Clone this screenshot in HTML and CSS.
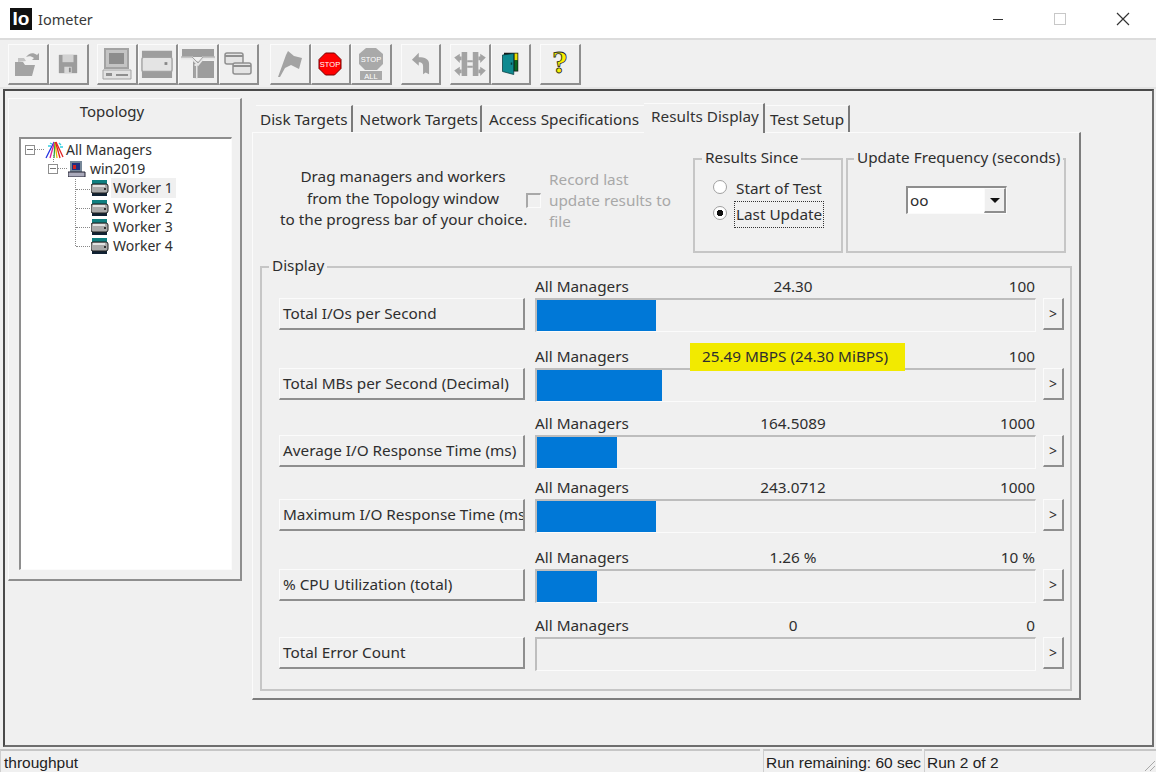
FILE: index.html
```html
<!DOCTYPE html>
<html lang="en">
<head>
    <meta charset="UTF-8">
    <meta name="viewport" content="width=device-width, initial-scale=1.0">
    <title>Iometer</title>
    <link rel="stylesheet" href="styles.css">
</head>
<body>
    <svg class="defs" width="0" height="0">
        <symbol id="worker" viewBox="0 0 18 16">
            <rect x="1" y="0" width="15" height="16" fill="#0f7f80"/>
            <rect x="1" y="13" width="15" height="3" fill="#123"/>
            <rect x="0" y="4" width="17" height="9" rx="2" fill="#a9a9a9" stroke="#222"/>
            <rect x="2" y="5" width="12" height="2" fill="#e2e2e2"/>
            <rect x="13" y="8" width="2" height="2" fill="#333"/>
        </symbol>
    </svg>

    <header class="titlebar">
        <div class="app-logo">Io</div>
        <div class="app-name">Iometer</div>
        <div class="caption-btns">
            <svg width="12" height="12" viewBox="0 0 12 12"><path d="M1 6.5h10" stroke="#333" fill="none"/></svg>
            <svg width="12" height="12" viewBox="0 0 12 12"><rect x="0.5" y="0.5" width="11" height="11" stroke="#c8c8c8" fill="none"/></svg>
            <svg width="14" height="14" viewBox="0 0 14 14"><path d="M1 1l12 12M13 1L1 13" stroke="#333" stroke-width="1.2" fill="none"/></svg>
        </div>
    </header>

    <!-- toolbar, groups are separated by a small gap -->
    <nav class="toolbar">
        <div class="tool-group">
            <button class="tool"><svg width="30" height="28" viewBox="0 0 30 28"><path d="M2 12h8l2 3h10l-3 11H2z" fill="#a3a3a3"/><path d="M5 12V8h6l2 3" fill="#c2c2c2"/><path d="M13 7c3-4 7-5 11-2l2-2v7h-7l2-2c-3-2-5-2-8-1z" fill="#a3a3a3"/></svg></button>
            <button class="tool"><svg width="22" height="22" viewBox="0 0 24 24"><path d="M2 2h20v20H2z" fill="#9c9c9c"/><path d="M6 2h12v8H6z" fill="#d2d2d2"/><path d="M8 15h8v7H8z" fill="#d8d8d8"/><path d="M13 16h2v5h-2z" fill="#888"/></svg></button>
        </div>
        <div class="tool-group second">
            <button class="tool"><svg width="30" height="32" viewBox="0 0 30 32"><path d="M3 1h23v19H3z" fill="#c4c4c4" stroke="#a3a3a3" stroke-width="2"/><path d="M7 5h15v11H7z" fill="#8d8d8d"/><path d="M1 22h28v9H1z" fill="#e2e2e2" stroke="#a3a3a3"/><path d="M4 25h6v3H4zM14 26h12v2H14z" fill="#8f8f8f"/></svg></button>
            <button class="tool"><svg width="32" height="30" viewBox="0 0 34 30"><path d="M1 1h32v8H1zM1 22h32v8H1z" fill="#9d9d9d"/><rect x="1" y="8" width="32" height="15" rx="2" fill="#e4e4e4" stroke="#a3a3a3" stroke-width="1.5"/><path d="M25 13h3v3h-3z" fill="#888"/></svg></button>
            <button class="tool"><svg width="34" height="32" viewBox="0 0 34 32"><path d="M1 1h32v8H1zM12 13h21v17H12z" fill="#9d9d9d"/><path d="M0 10h11l6 6 5-6h12" fill="none" stroke="#e6e6e6" stroke-width="3"/><path d="M0 9h11l6 6 5-6h12" fill="none" stroke="#a3a3a3"/><path d="M15 16v15" stroke="#e6e6e6" stroke-width="3"/><path d="M13 18h2v12h-2z" fill="#a3a3a3"/></svg></button>
            <button class="tool"><svg width="28" height="26" viewBox="0 0 28 26"><rect x="1" y="2" width="18" height="11" rx="2" fill="#e4e4e4" stroke="#8f8f8f" stroke-width="1.5"/><rect x="9" y="12" width="18" height="11" rx="2" fill="#e4e4e4" stroke="#8f8f8f" stroke-width="1.5"/><path d="M1 5h18M9 15h18" stroke="#8f8f8f" stroke-width="2"/></svg></button>
        </div>
        <div class="tool-group third">
            <button class="tool"><svg width="26" height="30" viewBox="0 0 26 30"><path d="M1 28L9 6l2-4 6 5 8 2-3 11-8-4-6 3-5 9z" fill="#a3a3a3"/></svg></button>
            <button class="tool"><svg width="24" height="24" viewBox="0 0 24 24"><path d="M7.5 1h9L23 7.500v9L16.500 23h-9L1 16.500v-9z" fill="#f00" stroke="#700"/><text x="12" y="15" class="stop-text">STOP</text></svg></button>
            <button class="tool"><svg width="24" height="32" viewBox="0 0 24 32"><path d="M7 0h10l7 6v10l-6 6H6l-6-6V6z" fill="#a9a9a9"/><text x="12" y="14" class="stop-text">STOP</text><rect x="1" y="23" width="22" height="9" fill="#a9a9a9"/><text x="12" y="30.500" class="stop-text">ALL</text></svg></button>
        </div>
        <div class="tool-group">
            <button class="tool"><svg width="19" height="24" viewBox="0 0 22 28"><path d="M9 1L1 9l8 7v-4c4 0 5 2 5 5v9l3-2 4 2V14C21 8 16 6 9 6z" fill="#a3a3a3"/></svg></button>
        </div>
        <div class="tool-group">
            <button class="tool"><svg width="34" height="26" viewBox="0 0 36 28"><path d="M9 1h6v26H9zM21 1h6v26h-6z" fill="#a3a3a3"/><path d="M1 7l6-4v3h2v4H7v3zM1 21l6-4v3h2v4H7v3zM35 7l-6-4v3h-2v4h2v3zM35 21l-6-4v3h-2v4h2v3z" fill="#a3a3a3"/><path d="M15 10h6v2h-6zM15 16h6v2h-6z" fill="#a3a3a3"/></svg></button>
            <button class="tool"><svg width="18" height="26" viewBox="0 0 24 32"><path d="M4 1h19v25H4z" fill="#1a1a1a"/><path d="M18 2h4v9h-4z" fill="#e8e000"/><path d="M18 11h4v14h-4z" fill="#0a6a20"/><path d="M2 4l15-2v28L2 26z" fill="#0e8a90" stroke="#063a3c"/><path d="M13 14h2v3h-2z" fill="#063a3c"/></svg></button>
        </div>
        <div class="tool-group">
            <button class="tool"><svg width="30" height="38" viewBox="0 0 30 38"><text x="15" y="28" class="help-text">?</text></svg></button>
        </div>
    </nav>

    <main class="frame">
        <section class="topology">
            <div class="topology-title">Topology</div>
            <div class="tree">
                <div class="tree-row root">
                    <span class="expander"></span>
                    <svg width="22" height="20" viewBox="0 0 22 20" fill="none" stroke-width="1.300"><path d="M10 2L2 18" stroke="#2030e0"/><path d="M10.500 2L6 18" stroke="#e0209a"/><path d="M11 2l-1 16" stroke="#30a040"/><path d="M11 2l2 16" stroke="#e0c000"/><path d="M11.500 2L16 18" stroke="#e02020"/><path d="M12 2l7 15" stroke="#e02020"/><path d="M6 3l2 1M15 3l2 2M4 6h3M16 7h3" stroke="#30d0e0"/></svg>
                    <span>All Managers</span>
                </div>
                <div class="tree-row host">
                    <span class="expander"></span>
                    <svg width="18" height="16" viewBox="0 0 18 16"><path d="M2 0h12v11H2z" fill="#789"/><path d="M4 2h8v7H4z" fill="#203080"/><path d="M5 4h3v4H5z" fill="#d02020"/><path d="M0 11h17v5H0z" fill="#aab" stroke="#223"/></svg>
                    <span>win2019</span>
                </div>
                <div class="workers">
                    <div class="tree-row worker"><svg width="18" height="16"><use href="#worker"/></svg><span class="selected">Worker 1</span></div>
                    <div class="tree-row worker"><svg width="18" height="16"><use href="#worker"/></svg><span>Worker 2</span></div>
                    <div class="tree-row worker"><svg width="18" height="16"><use href="#worker"/></svg><span>Worker 3</span></div>
                    <div class="tree-row worker"><svg width="18" height="16"><use href="#worker"/></svg><span>Worker 4</span></div>
                </div>
            </div>
        </section>

        <section class="tabs-area">
            <div class="tabs">
                <div class="tab first">Disk Targets</div>
                <div class="tab network">Network Targets</div>
                <div class="tab access">Access Specifications</div>
                <div class="tab active">Results Display</div>
                <div class="tab last">Test Setup</div>
            </div>
            <div class="pane">
                <div class="pane-top">
                    <div class="drag-hint">Drag managers and workers<br>from the Topology window<br>to the progress bar of your choice.</div>
                    <div class="record">
                        <span class="checkbox"></span>
                        <span class="record-label">Record last update results to file</span>
                    </div>
                    <fieldset class="group since">
                        <legend>Results Since</legend>
                        <div class="radio-row"><span class="radio"></span><span>Start of Test</span></div>
                        <div class="radio-row"><span class="radio checked"></span><span class="focused">Last Update</span></div>
                    </fieldset>
                    <fieldset class="group frequency">
                        <legend>Update Frequency (seconds)</legend>
                        <div class="combo">
                            <span class="combo-value">oo</span>
                            <span class="combo-btn"></span>
                        </div>
                    </fieldset>
                </div>

                <fieldset class="group display">
                    <legend>Display</legend>

                    <div class="meter">
                        <div class="meter-label"><span>All Managers</span><span class="meter-value">24.30</span><span class="meter-max">100</span></div>
                        <button class="meter-btn">Total I/Os per Second</button>
                        <div class="bar"><div class="bar-fill" style="width: 119px"></div></div>
                        <button class="more-btn">&gt;</button>
                    </div>

                    <div class="meter">
                        <div class="meter-label"><span>All Managers</span><span class="meter-value"><span class="highlight">25.49 MBPS (24.30 MiBPS)</span></span><span class="meter-max">100</span></div>
                        <button class="meter-btn">Total MBs per Second (Decimal)</button>
                        <div class="bar"><div class="bar-fill" style="width: 125px"></div></div>
                        <button class="more-btn">&gt;</button>
                    </div>

                    <div class="meter">
                        <div class="meter-label"><span>All Managers</span><span class="meter-value">164.5089</span><span class="meter-max">1000</span></div>
                        <button class="meter-btn">Average I/O Response Time (ms)</button>
                        <div class="bar"><div class="bar-fill" style="width: 80px"></div></div>
                        <button class="more-btn">&gt;</button>
                    </div>

                    <div class="meter">
                        <div class="meter-label"><span>All Managers</span><span class="meter-value">243.0712</span><span class="meter-max">1000</span></div>
                        <button class="meter-btn">Maximum I/O Response Time (ms)</button>
                        <div class="bar"><div class="bar-fill" style="width: 119px"></div></div>
                        <button class="more-btn">&gt;</button>
                    </div>

                    <div class="meter">
                        <div class="meter-label"><span>All Managers</span><span class="meter-value">1.26 %</span><span class="meter-max">10 %</span></div>
                        <button class="meter-btn">% CPU Utilization (total)</button>
                        <div class="bar"><div class="bar-fill" style="width: 60px"></div></div>
                        <button class="more-btn">&gt;</button>
                    </div>

                    <div class="meter">
                        <div class="meter-label"><span>All Managers</span><span class="meter-value">0</span><span class="meter-max">0</span></div>
                        <button class="meter-btn">Total Error Count</button>
                        <div class="bar"></div>
                        <button class="more-btn">&gt;</button>
                    </div>
                </fieldset>
            </div>
        </section>
    </main>

    <footer class="statusbar">
        <div class="status-cell status-main">throughput</div>
        <div class="status-cell status-remaining">Run remaining: 60 sec</div>
        <div class="status-cell status-run">Run 2 of 2</div>
        <svg class="grip" width="14" height="14" viewBox="0 0 14 14"><path d="M13 3L3 13M13 8l-5 5" stroke="#a8a8a8" fill="none"/></svg>
    </footer>
</body>
</html>
```

FILE: styles.css
```css
* {
    box-sizing: border-box;
}
html, body {
    margin: 0;
    height: 100%;
}
body {
    width: 1156px;
    height: 772px;
    overflow: hidden;
    display: flex;
    flex-direction: column;
    background-color: #f0f0f0;
    color: #2e2e2e;
    font-family: "Noto Sans", Arial, sans-serif;
    font-size: 15.3px;
    line-height: 20px;
}
button {
    font: inherit;
    color: inherit;
    background-color: #f0f0f0;
    padding: 0;
    border-style: solid;
    border-width: 1px 2px 2px 1px;
    border-color: #fbfbfb #8e8e8e #8e8e8e #fbfbfb;
}
.defs {
    display: block;
    height: 0;
}

/* title bar */
.titlebar {
    height: 40px;
    flex: none;
    display: flex;
    align-items: center;
    background-color: #fff;
    border-bottom: 2px solid #dcdcdc;
    padding: 0 26px 1px 10px;
}
.app-logo {
    width: 22px;
    height: 22px;
    background-color: #111;
    color: #fff;
    font-family: "Liberation Sans", Arial, sans-serif;
    font-weight: bold;
    font-size: 19px;
    line-height: 22px;
    text-align: center;
}
.app-name {
    margin-left: 6px;
    font-size: 14.500px;
    color: #3a3a3a;
}
.caption-btns {
    margin-left: auto;
    display: flex;
    align-items: center;
    gap: 50px;
}

/* toolbar */
.toolbar {
    height: 49px;
    flex: none;
    display: flex;
    gap: 9px;
    padding: 4px 0 0 8px;
    border-bottom: 2px solid #e4e4e4;
}
.tool-group {
    display: flex;
}
.tool-group.second {
    margin-left: -1px;
}
.tool-group.third {
    margin-left: 2px;
}
.tool {
    width: 40.500px;
    height: 41px;
    display: flex;
    align-items: center;
    justify-content: center;
}
.stop-text {
    font-family: "Liberation Sans", Arial, sans-serif;
    font-size: 7.500px;
    text-anchor: middle;
    fill: #fff;
}
.help-text {
    font-family: "Liberation Serif", serif;
    font-weight: bold;
    font-size: 32px;
    text-anchor: middle;
    fill: #f8f000;
    stroke: #222;
    stroke-width: 0.8px;
}

/* main frame */
.frame {
    flex: 1;
    display: flex;
    align-items: flex-start;
    margin: 0 2px 0 3px;
    padding: 7px 0 0 3px;
    border: 2px solid #5a5a5a;
    border-color: #4a4a4a #6e6e6e #6e6e6e #4a4a4a;
}

/* topology panel */
.topology {
    width: 234px;
    height: 483px;
    flex: none;
    display: flex;
    flex-direction: column;
    padding: 2px 8px 9px 10px;
    border-style: solid;
    border-width: 1px 2px 2px 1px;
    border-color: #fbfbfb #8e8e8e #8e8e8e #fbfbfb;
}
.topology-title {
    text-align: center;
    height: 36px;
    padding-right: 27px;
    font-size: 15px;
}
.tree {
    flex: 1;
    background-color: #fff;
    border-style: solid;
    border-width: 2px 1px 1px 2px;
    border-color: #8e8e8e #fbfbfb #fbfbfb #8e8e8e;
    padding: 1px 0 0 4px;
    font-size: 14px;
}
.tree-row {
    display: flex;
    align-items: center;
    height: 19.300px;
    position: relative;
}
.tree-row svg {
    flex: none;
    position: relative;
}
.expander {
    width: 10px;
    height: 10px;
    border: 1px solid #8e8e8e;
    background: linear-gradient(#777, #777) center / 6px 1px no-repeat;
    flex: none;
    margin-right: 9px;
    position: relative;
}
.expander::after {
    content: "";
    position: absolute;
    left: 9px;
    top: 3px;
    width: 9px;
    border-top: 1px dotted #888;
}
.host {
    padding-left: 23px;
}
.host::before {
    content: "";
    position: absolute;
    left: 28px;
    top: -4px;
    height: 7px;
    border-left: 1px dotted #888;
}
.host .expander {
    margin-right: 10px;
}
.host span:last-child {
    margin-left: 4px;
}
.workers {
    margin-left: 50px;
    border-left: 1px dotted #888;
    height: 67px;
}
.worker {
    padding-left: 15px;
}
.worker::before {
    content: "";
    position: absolute;
    left: 0;
    top: 10px;
    width: 14px;
    border-top: 1px dotted #888;
}
.worker span {
    margin-left: 2px;
    padding: 0 3px 0 2px;
}
.selected {
    background-color: #f0f0f0;
}

/* tabs */
.tabs-area {
    width: 829px;
    margin-left: 10px;
    flex: none;
}
.tabs {
    display: flex;
    align-items: flex-end;
    height: 34px;
    padding: 5px 0 0 4px;
}
.tab {
    height: 27px;
    padding: 3px 3px 0 7px;
    border-right: 2px solid #7a7a7a;
    border-top: 1px solid #fbfbfb;
    margin-right: 1px;
    white-space: nowrap;
}
.tab.first {
    padding-left: 4px;
}
.tab.network {
    padding-left: 6px;
    padding-right: 2px;
}
.tab.access {
    padding-left: 6px;
    padding-right: 5px;
    border-right: 0;
    margin-right: 0;
}
.tab.active {
    height: 30px;
    margin-bottom: -1px;
    padding: 2px 4px 0 7px;
    background-color: #f0f0f0;
    position: relative;
    color: #333;
}
.tab.last {
    padding: 3px 4px 0 4px;
}
.pane {
    height: 568px;
    border-style: solid;
    border-width: 1px 2px 2px 1px;
    border-color: #fbfbfb #7d7d7d #7d7d7d #fbfbfb;
    padding-left: 7px;
}
.pane-top {
    height: 122px;
    display: flex;
    align-items: flex-start;
}
.drag-hint {
    width: 246px;
    margin: 33px 0 0 20px;
    text-align: center;
    line-height: 21.500px;
    white-space: nowrap;
    flex: none;
}
.record {
    width: 167px;
    margin: 36px 0 0 0;
    display: flex;
    align-items: center;
    flex: none;
    color: #a8a8a8;
}
.checkbox {
    width: 15px;
    height: 15px;
    flex: none;
    background-color: #f0f0f0;
    border-style: solid;
    border-width: 2px 1px 1px 2px;
    border-color: #a8a8a8 #fbfbfb #fbfbfb #a8a8a8;
    margin-right: 8px;
}
.record-label {
    width: 125px;
    line-height: 21px;
}
.group {
    margin: 0;
    padding: 0;
    min-width: 0;
    border: 2px solid #c6c6c6;
}
.group legend {
    padding: 0 3px 4px;
    white-space: nowrap;
}
.since {
    width: 150px;
    height: 106px;
    margin: 14px 0 0 0;
    padding: 4px 0 0 18px;
}
.since legend {
    margin-left: -11px;
}
.frequency {
    width: 220px;
    height: 106px;
    margin: 14px 0 0 3px;
    padding: 15px 0 0 58px;
}
.frequency legend {
    margin-left: -52px;
}
.radio-row {
    display: flex;
    align-items: center;
    height: 26px;
    gap: 9px;
}
.radio {
    width: 14px;
    height: 14px;
    border-radius: 50%;
    background-color: #fff;
    border: 1px solid #a0a0a0;
    flex: none;
    margin-top: -2px;
}
.radio.checked {
    background: radial-gradient(circle, #111 0 3px, #fff 3.500px);
}
.focused {
    outline: 1px dotted #333;
    padding: 2px 1px 3px;
    margin-left: -1px;
}
.combo {
    width: 101px;
    height: 28px;
    display: flex;
    background-color: #fff;
    border-style: solid;
    border-width: 2px 1px 1px 2px;
    border-color: #8e8e8e #fbfbfb #fbfbfb #8e8e8e;
}
.combo-value {
    flex: 1;
    padding-left: 2px;
    line-height: 24px;
}
.combo-btn {
    width: 22px;
    background-color: #f0f0f0;
    border-style: solid;
    border-width: 1px 2px 2px 1px;
    border-color: #fbfbfb #8e8e8e #8e8e8e #fbfbfb;
    display: flex;
    align-items: center;
    justify-content: center;
}
.combo-btn::after {
    content: "";
    border-style: solid;
    border-width: 5px 5px 0;
    border-color: #111 transparent transparent;
}

/* display group, each meter has a label line and a row with button and bar */
.display {
    width: 812px;
    height: 436px;
    padding: 0 6px 0 17px;
}
.display legend {
    margin-left: -10px;
}
.meter {
    display: grid;
    grid-template-columns: 256px 508px 21px;
    grid-template-rows: 20px 34px;
}
.meter:nth-of-type(1) { margin-top: -1px; }
.meter:nth-of-type(2) { margin-top: 16px; }
.meter:nth-of-type(3) { margin-top: 13px; }
.meter:nth-of-type(4) { margin-top: 10px; }
.meter:nth-of-type(5) { margin-top: 16px; }
.meter:nth-of-type(6) { margin-top: 14px; }
.meter-label {
    grid-column: 2;
    grid-row: 1;
    width: 501px;
    margin-top: -2px;
    display: grid;
    grid-template-columns: 170px 176px 1fr;
    white-space: nowrap;
    padding-right: 1px;
}
.meter-value {
    justify-self: center;
}
.meter-max {
    text-align: right;
}
.highlight {
    display: inline-block;
    background-color: #f2ea00;
    padding: 3px 17px 5px 12px;
    margin: -3px 0 -5px 9px;
    position: relative;
    z-index: 1;
}
.meter-btn {
    grid-column: 1;
    grid-row: 2;
    width: 246px;
    height: 32px;
    text-align: left;
    padding: 0 0 2px 3px;
    white-space: nowrap;
    overflow: hidden;
}
.bar {
    grid-column: 2;
    grid-row: 2;
    width: 501px;
    height: 34px;
    border-style: solid;
    border-width: 2px 1px 1px 2px;
    border-color: #bdbdbd #fbfbfb #fbfbfb #bdbdbd;
}
.bar-fill {
    height: 100%;
    background-color: #0078d7;
}
.more-btn {
    grid-column: 3;
    grid-row: 2;
    height: 32px;
    font-size: 14px;
}

/* status bar */
.statusbar {
    height: 25px;
    flex: none;
    display: flex;
    position: relative;
    overflow: hidden;
    color: #222;
}
.status-cell {
    border-top: 2px solid #c6c6c6;
    border-left: 1px solid #cfcfcf;
    margin-top: 2px;
    padding: 2px 0 0 2px;
    font-family: "Liberation Sans", Arial, sans-serif;
    font-size: 15.500px;
    white-space: nowrap;
}
.status-main {
    width: 760px;
    padding-left: 3px;
}
.status-remaining {
    width: 159px;
    margin-left: 3px;
}
.status-run {
    flex: 1;
    margin-left: 2px;
}
.grip {
    position: absolute;
    right: 0;
    bottom: 0;
}
```
